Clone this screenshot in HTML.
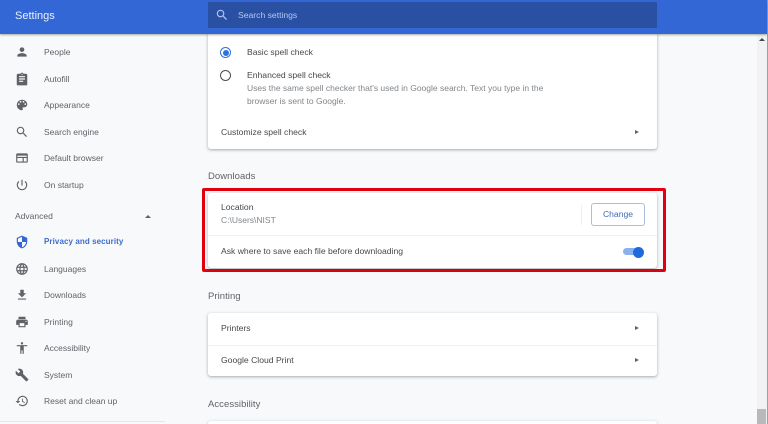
<!DOCTYPE html>
<html><head><meta charset="utf-8">
<style>
*{box-sizing:border-box}
html,body{margin:0;padding:0;width:768px;height:424px;overflow:hidden;background:#f8f9fb}
body{font-family:"Liberation Sans",sans-serif;position:relative;color:#5f6368;filter:blur(.3px)}
.t{position:absolute;font-size:8.6px;line-height:12px;white-space:nowrap}
.n{left:44px;color:#5f6368;font-size:8.5px}
.d{color:#45484c}
.g{color:#80868b;font-size:8.5px}
.h{font-size:9.5px;color:#5f6368;left:208px;letter-spacing:.05px}
.card{position:absolute;left:208px;width:449px;background:#fff;box-shadow:0 1px 2px rgba(60,64,67,.3),0 1px 3px 1px rgba(60,64,67,.1);border-radius:3px}
.ic{position:absolute;left:15px;width:14px;height:14px;fill:#5f6368}
.line{position:absolute;left:208px;width:449px;height:1px;background:#eff0f1}
.arr{position:absolute;width:0;height:0;border-left:4px solid #5f6368;border-top:2.5px solid transparent;border-bottom:2.5px solid transparent;left:635px}
</style></head><body>

<svg class="ic" style="top:45px" viewBox="0 0 24 24"><path d="M12 12c2.21 0 4-1.79 4-4s-1.79-4-4-4-4 1.79-4 4 1.79 4 4 4zm0 2c-2.67 0-8 1.34-8 4v2h16v-2c0-2.66-5.33-4-8-4z"/></svg>
<div class="t n" style="top:46px">People</div>
<svg class="ic" style="top:72px" viewBox="0 0 24 24"><path d="M19 3h-4.18C14.4 1.84 13.3 1 12 1s-2.4.84-2.82 2H5c-1.1 0-2 .9-2 2v16c0 1.1.9 2 2 2h14c1.1 0 2-.9 2-2V5c0-1.1-.9-2-2-2zm-7 0c.55 0 1 .45 1 1s-.45 1-1 1-1-.45-1-1 .45-1 1-1zm2 14H7v-2h7v2zm3-4H7v-2h10v2zm0-4H7V7h10v2z"/></svg>
<div class="t n" style="top:73px">Autofill</div>
<svg class="ic" style="top:98px" viewBox="0 0 24 24"><path d="M12 3a9 9 0 0 0 0 18c.83 0 1.5-.67 1.5-1.5 0-.39-.15-.74-.39-1.01-.23-.26-.38-.61-.38-.99 0-.83.67-1.5 1.5-1.5H16c2.76 0 5-2.24 5-5 0-4.42-4.03-8-9-8zm-5.5 9a1.5 1.5 0 1 1 0-3 1.5 1.5 0 0 1 0 3zm3-4a1.5 1.5 0 1 1 0-3 1.5 1.5 0 0 1 0 3zm5 0a1.5 1.5 0 1 1 0-3 1.5 1.5 0 0 1 0 3zm3 4a1.5 1.5 0 1 1 0-3 1.5 1.5 0 0 1 0 3z"/></svg>
<div class="t n" style="top:99px">Appearance</div>
<svg class="ic" style="top:125px" viewBox="0 0 24 24"><path d="M15.5 14h-.79l-.28-.27A6.47 6.47 0 0 0 16 9.5 6.5 6.5 0 1 0 9.5 16c1.61 0 3.09-.59 4.23-1.57l.27.28v.79l5 4.99L20.49 19l-4.99-5zm-6 0C7.01 14 5 11.99 5 9.5S7.01 5 9.5 5 14 7.01 14 9.5 11.99 14 9.5 14z"/></svg>
<div class="t n" style="top:126px">Search engine</div>
<svg class="ic" style="top:151px" viewBox="0 0 24 24"><path d="M20 4H4c-1.1 0-2 .9-2 2v12c0 1.1.9 2 2 2h16c1.1 0 2-.9 2-2V6c0-1.1-.9-2-2-2zM4 18v-6h9v6H4zm16 0h-5v-6h5v6zm0-8H4V8h16v2z"/></svg>
<div class="t n" style="top:152px">Default browser</div>
<svg class="ic" style="top:178px" viewBox="0 0 24 24"><path d="M13 3h-2v10h2V3zm4.83 2.17l-1.42 1.42A6.92 6.92 0 0 1 19 12a7 7 0 1 1-11.41-5.41L6.17 5.17A8.96 8.96 0 0 0 3 12a9 9 0 0 0 18 0c0-2.74-1.23-5.18-3.17-6.83z"/></svg>
<div class="t n" style="top:179px">On startup</div>

<div class="t n" style="left:15px;top:210px">Advanced</div>
<div style="position:absolute;left:144.5px;top:215px;width:0;height:0;border-bottom:3px solid #5f6368;border-left:3.5px solid transparent;border-right:3.5px solid transparent"></div>

<svg class="ic" style="top:235px;fill:#3367d6" viewBox="0 0 24 24"><path d="M12 1L3 5v6c0 5.55 3.84 10.74 9 12 5.16-1.26 9-6.45 9-12V5l-9-4zm0 11h7c-.53 4.12-3.28 7.79-7 8.94V12H5V6.3l7-3.11V12z"/></svg>
<div class="t" style="left:44px;top:236px;color:#3f6cc9;font-weight:bold;font-size:8px;letter-spacing:.08px">Privacy and security</div>
<svg class="ic" style="top:262px" viewBox="0 0 24 24"><path d="M12 2a10 10 0 1 0 0 20 10 10 0 0 0 0-20zm6.93 6h-2.95a15.65 15.65 0 0 0-1.38-3.56A8.03 8.03 0 0 1 18.92 8zM12 4.04c.83 1.2 1.48 2.53 1.91 3.96h-3.82c.43-1.43 1.08-2.76 1.91-3.96zM4.26 14a8.2 8.2 0 0 1 0-4h3.38a16.5 16.5 0 0 0 0 4H4.26zm.82 2h2.95c.32 1.25.78 2.45 1.38 3.56A7.99 7.99 0 0 1 5.08 16zm2.95-8H5.08A7.99 7.99 0 0 1 9.41 4.44 15.65 15.65 0 0 0 8.03 8zM12 19.96c-.83-1.2-1.48-2.53-1.91-3.96h3.82c-.43 1.43-1.08 2.76-1.91 3.96zM14.34 14H9.66a14.7 14.7 0 0 1 0-4h4.68a14.7 14.7 0 0 1 0 4zm.25 5.56c.6-1.11 1.06-2.31 1.38-3.56h2.95a8.03 8.03 0 0 1-4.33 3.56zM16.36 14a16.5 16.5 0 0 0 0-4h3.38a8.2 8.2 0 0 1 0 4h-3.38z"/></svg>
<div class="t n" style="top:263px">Languages</div>
<svg class="ic" style="top:288px" viewBox="0 0 24 24"><path d="M19 9h-4V3H9v6H5l7 7 7-7zM5 18v2h14v-2H5z"/></svg>
<div class="t n" style="top:289px">Downloads</div>
<svg class="ic" style="top:315px" viewBox="0 0 24 24"><path d="M19 8H5c-1.66 0-3 1.34-3 3v6h4v4h12v-4h4v-6c0-1.66-1.34-3-3-3zm-3 11H8v-5h8v5zm3-7c-.55 0-1-.45-1-1s.45-1 1-1 1 .45 1 1-.45 1-1 1zm-1-9H6v4h12V3z"/></svg>
<div class="t n" style="top:316px">Printing</div>
<svg class="ic" style="top:341px" viewBox="0 0 24 24"><path d="M12 2a2 2 0 1 1 0 4 2 2 0 0 1 0-4zm9 7h-6v13h-2v-6h-2v6H9V9H3V7h18v2z"/></svg>
<div class="t n" style="top:342px">Accessibility</div>
<svg class="ic" style="top:368px" viewBox="0 0 24 24"><path d="M22.7 19l-9.1-9.1c.9-2.3.4-5-1.5-6.9-2-2-5-2.4-7.4-1.3L9 6 6 9 1.6 4.7C.4 7.1.9 10.1 2.9 12.1c1.9 1.9 4.6 2.4 6.9 1.5l9.1 9.1c.4.4 1 .4 1.4 0l2.3-2.3c.5-.4.5-1.1.1-1.4z"/></svg>
<div class="t n" style="top:369px">System</div>
<svg class="ic" style="top:394px" viewBox="0 0 24 24"><path d="M13 3a9 9 0 0 0-9 9H1l3.89 3.89.07.14L9 12H6a7 7 0 1 1 2.05 4.95l-1.42 1.42A9 9 0 1 0 13 3zm-1 5v5l4.28 2.54.72-1.21-3.5-2.08V8H12z"/></svg>
<div class="t n" style="top:395px">Reset and clean up</div>
<div style="position:absolute;left:0;top:421px;width:165px;height:1px;background:#e6e7ea"></div>

<div class="card" style="top:20px;height:129px"></div>
<div style="position:absolute;left:220px;top:47px;width:11px;height:11px;border-radius:50%;border:1.3px solid #2f6fdc;background:#fff"></div>
<div style="position:absolute;left:222.5px;top:49.5px;width:6px;height:6px;border-radius:50%;background:#2f6fdc"></div>
<div style="position:absolute;left:220px;top:70px;width:11px;height:11px;border-radius:50%;border:1.3px solid #4a4d51;background:#fff"></div>
<div class="t d" style="left:247px;top:46px">Basic spell check</div>
<div class="t d" style="left:247px;top:69px">Enhanced spell check</div>
<div class="t g" style="left:247px;top:82px">Uses the same spell checker that's used in Google search. Text you type in the</div>
<div class="t g" style="left:247px;top:95px">browser is sent to Google.</div>
<div class="t d" style="left:221px;top:126px">Customize spell check</div>
<div class="arr" style="top:129.5px"></div>

<div class="t h" style="top:171px">Downloads</div>
<div style="position:absolute;left:202px;top:188px;width:464px;height:84px;border:3px solid #e2000f;border-radius:2px"></div>
<div class="card" style="top:193px;height:75px"></div>
<div class="t d" style="left:221px;top:201px">Location</div>
<div class="t g" style="left:221px;top:214px">C:\Users\NIST</div>
<div style="position:absolute;left:581px;top:205px;width:1px;height:20px;background:#eceef0"></div>
<div style="position:absolute;left:591px;top:203px;width:54px;height:23px;border:1px solid #a9bfdc;border-radius:3px;background:#fff;text-align:center;font-size:8.6px;line-height:21px;color:#3f6cb8">Change</div>
<div class="line" style="top:235px"></div>
<div class="t d" style="left:221px;top:245px">Ask where to save each file before downloading</div>
<div style="position:absolute;left:623px;top:248px;width:18px;height:7px;border-radius:4px;background:#8ab0ee"></div>
<div style="position:absolute;left:633px;top:246.5px;width:11px;height:11px;border-radius:50%;background:#1a6ae0"></div>

<div class="t h" style="top:291px">Printing</div>
<div class="card" style="top:313px;height:63px"></div>
<div class="t d" style="left:221px;top:322px">Printers</div>
<div class="arr" style="top:326px"></div>
<div class="line" style="top:345px"></div>
<div class="t d" style="left:221px;top:354px">Google Cloud Print</div>
<div class="arr" style="top:358px"></div>

<div class="t h" style="top:399px">Accessibility</div>
<div class="card" style="top:421px;height:20px"></div>

<div style="position:absolute;left:757px;top:35px;width:10px;height:389px;background:#f2f2f4"></div>
<div style="position:absolute;left:767px;top:0;width:1px;height:424px;background:#7fa6cf"></div>
<div style="position:absolute;left:759px;top:38px;width:0;height:0;border-bottom:3px solid #45484c;border-left:3px solid transparent;border-right:3px solid transparent"></div>
<div style="position:absolute;left:757px;top:409px;width:9px;height:15px;background:#b9b9bb"></div>

<div style="position:absolute;left:0;top:0;width:767px;height:34px;background:#3367d6;box-shadow:0 1px 2px rgba(60,64,67,.45)"></div>
<div style="position:absolute;left:208px;top:2px;width:449px;height:26px;background:#2a50a4;border-radius:1px"></div>
<div class="t" style="left:15px;top:9px;font-size:11px;line-height:14px;color:#e8f0fe">Settings</div>
<svg style="position:absolute;left:215px;top:8px;width:14px;height:14px;fill:#b4c7f0" viewBox="0 0 24 24"><path d="M15.5 14h-.79l-.28-.27A6.47 6.47 0 0 0 16 9.5 6.5 6.5 0 1 0 9.5 16c1.61 0 3.09-.59 4.23-1.57l.27.28v.79l5 4.99L20.49 19l-4.99-5zm-6 0C7.01 14 5 11.99 5 9.5S7.01 5 9.5 5 14 7.01 14 9.5 11.99 14 9.5 14z"/></svg>
<div class="t" style="left:238px;top:9px;color:#b4c7f0">Search settings</div>
</body></html>
